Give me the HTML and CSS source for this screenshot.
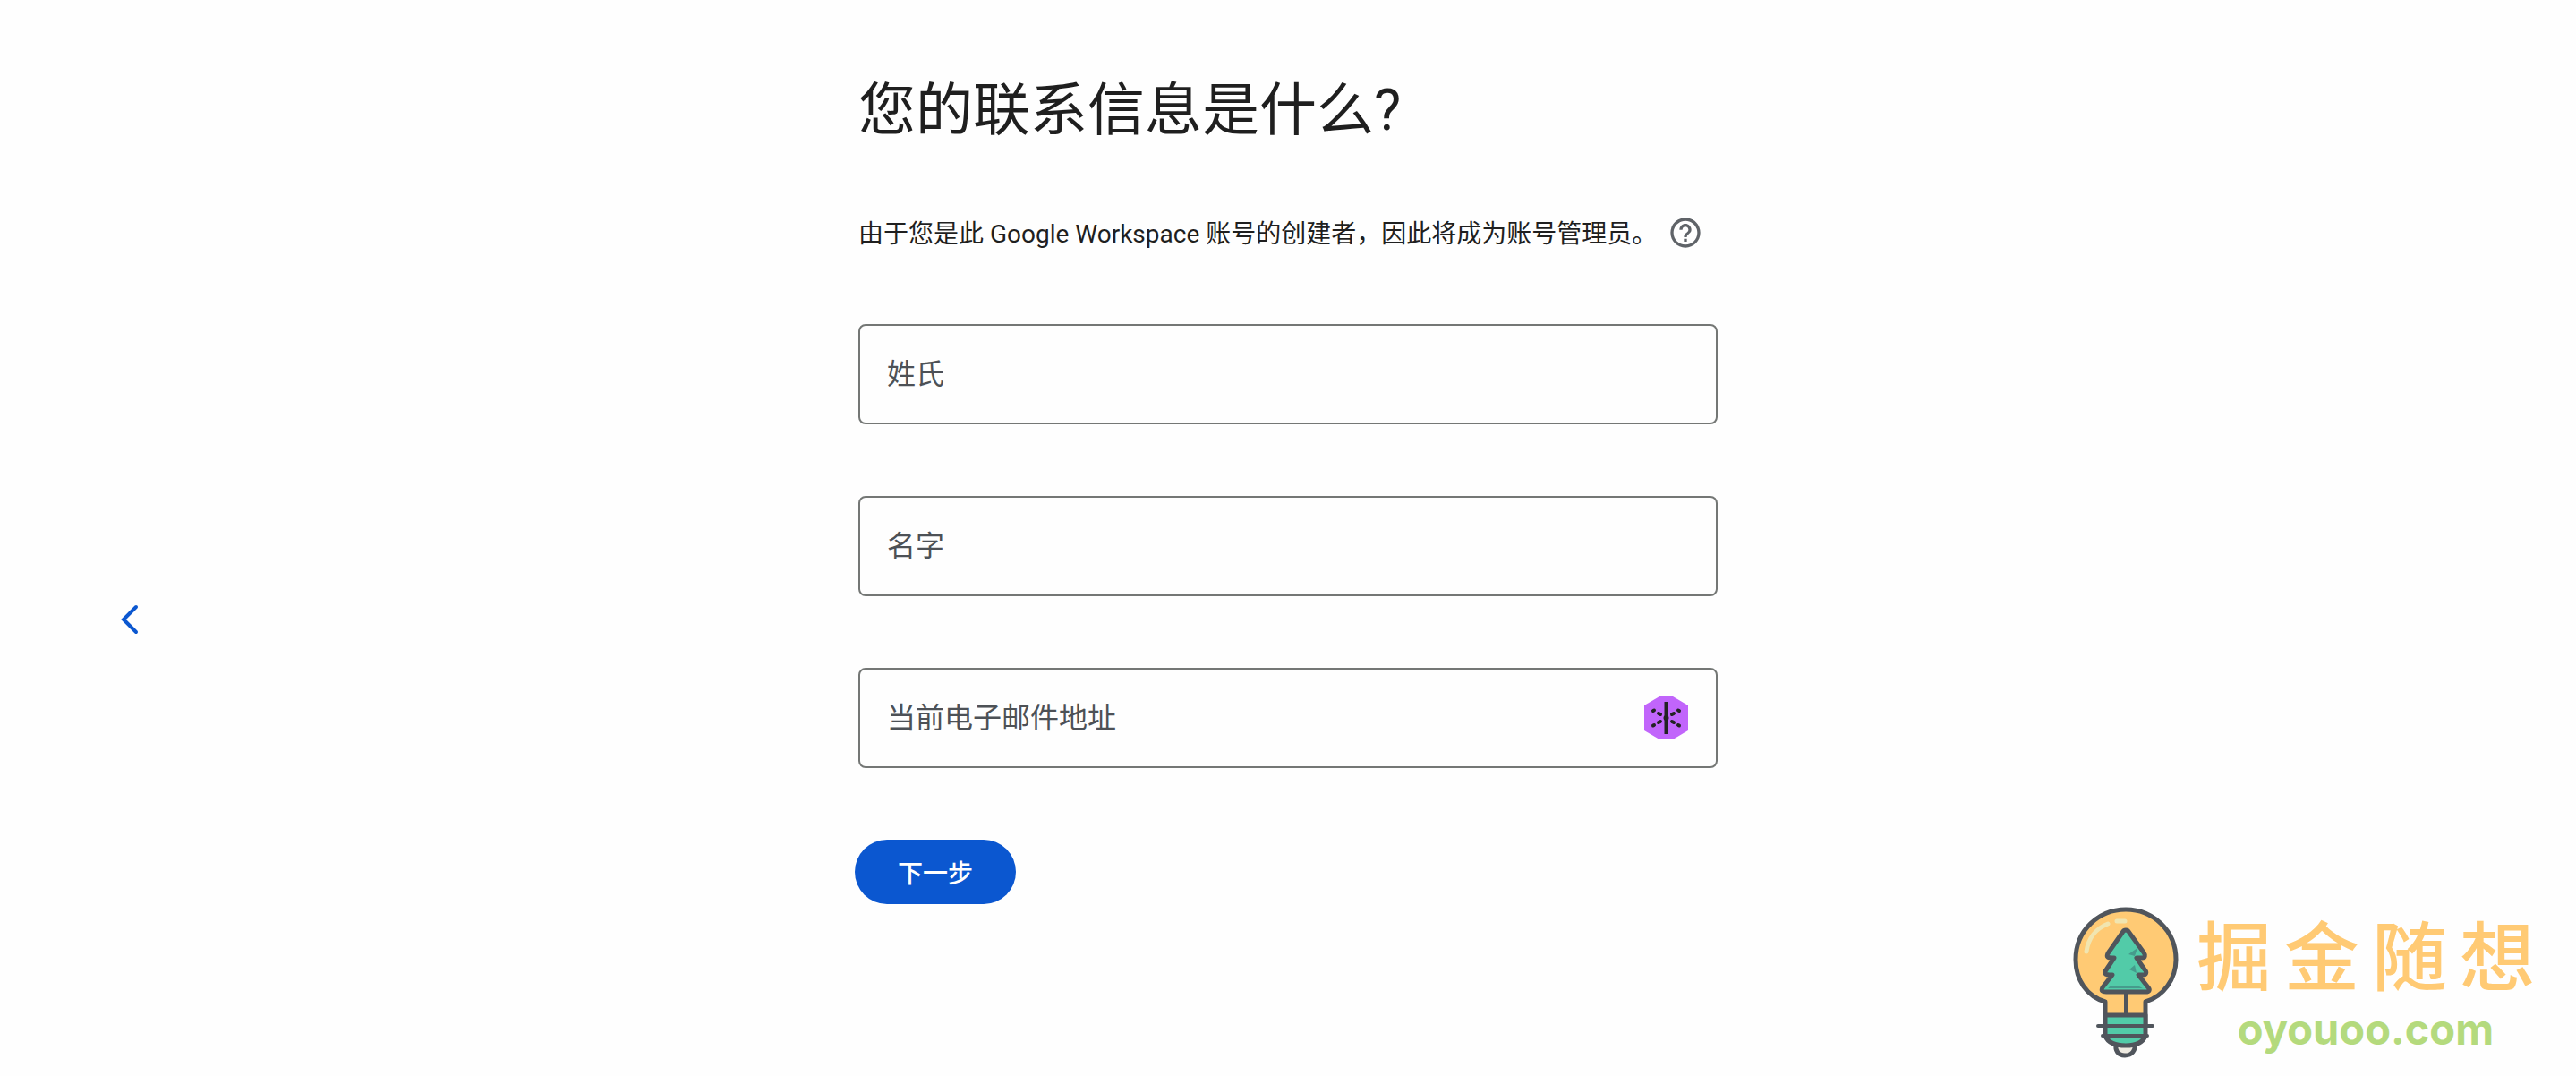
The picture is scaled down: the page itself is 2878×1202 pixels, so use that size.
FILE: index.html
```html
<!DOCTYPE html>
<html lang="zh-CN">
<head>
    <meta charset="UTF-8">
    <title>Google Workspace</title>
    <link rel="stylesheet" href="styles.css">
</head>
<body>
    <div class="page">
        <nav class="side">
            <button type="button" class="back" aria-label="返回">
                <svg width="48" height="48" viewBox="0 0 48 48">
                    <path d="M32 10 L18 24 L32 38" fill="none" stroke="#0b57d0" stroke-width="4" stroke-linecap="round"/>
                </svg>
            </button>
        </nav>

        <main class="content">
            <h1>您的联系信息是什么?</h1>

            <div class="intro">
                <p>由于您是此 Google Workspace 账号的创建者，因此将成为账号管理员。</p>
                <button type="button" class="help" aria-label="帮助">
                    <svg width="40" height="40" viewBox="0 0 24 24" fill="#5f6368">
                        <path d="M11 18h2v-2h-2v2zm1-16C6.48 2 2 6.48 2 12s4.48 10 10 10 10-4.48 10-10S17.52 2 12 2zm0 18c-4.41 0-8-3.59-8-8s3.59-8 8-8 8 3.59 8 8-3.59 8-8 8zm0-14c-2.21 0-4 1.79-4 4h2c0-1.1.9-2 2-2s2 .9 2 2c0 2-3 1.750-3 5h2c0-2.250 3-2.500 3-5 0-2.210-1.790-4-4-4z"/>
                    </svg>
                </button>
            </div>

            <form>
                <div class="field">
                    <input type="text" id="lastName" name="lastName" required>
                    <label for="lastName">姓氏</label>
                </div>
                <div class="field">
                    <input type="text" id="firstName" name="firstName" required>
                    <label for="firstName">名字</label>
                </div>
                <div class="field">
                    <input type="email" id="email" name="email" required>
                    <label for="email">当前电子邮件地址</label>
                    <svg class="field-icon" width="50" height="48" viewBox="0 0 50 48">
                        <path d="M17 0H32L49 10V38L32 48H17L0 38V10Z" fill="#c165fb"/>
                        <g stroke="#222" stroke-linecap="round" fill="none">
                            <path d="M24.500 6V42" stroke-width="4" stroke-linecap="butt"/>
                            <path d="M16 19L18 20M31 20L33 19M16 29L18 28M31 28L33 29" stroke-width="4"/>
                            <path d="M10 16L11 15.500M38 15.500L39 16M10 32.500L11 32M38 32L39 32.500" stroke-width="4"/>
                        </g>
                        <circle cx="24.500" cy="24" r="3" fill="#222"/>
                    </svg>
                </div>
                <button type="submit" class="next">下一步</button>
            </form>
        </main>

        <footer class="brand">
            <svg width="120" height="172" viewBox="0 0 120 172" stroke="#50555c" stroke-width="5" stroke-linejoin="round" stroke-linecap="round">
                <path d="M57 165C49 165 46 159 47 153H68C69 159 65 165 57 165Z" transform="translate(1 2)" fill="#eeeae1"/>
                <path d="M36 134V107C15 101 3 82 3 60C3 27 29 4 59 4C89 4 115 27 115 60C115 82 101 101 81 107V134Z" fill="#ffca74"/>
                <path d="M36 122H81V145C78 153 70 156 59 156C48 156 39 153 36 145Z" fill="#52cba8"/>
                <path d="M28 134H89M33 145H83" stroke-width="4"/>
                <path d="M59 96V122" stroke-width="4"/>
                <path d="M59 27C57 27 56 28 55 30L39 53C37 57 39 58 44 58H46L36 73C35 76 37 77 41 77H44L33 91C31 95 33 96 37 96H81C86 96 86 93 84 91L73 77H78C82 77 83 74 80 71L71 58H77C81 58 81 55 79 52L63 30C62 28 61 27 59 27Z" fill="#52cba8"/>
                <path d="M69 56L62 54L72 47M71 75L63 71L69 66M39 92H78L72 89H42Z" fill="#469b8c" stroke="none"/>
                <path d="M15 51C17 36 26 25 39 20M49 17H58" stroke="#f1e5b0" fill="none"/>
            </svg>
            <div class="brand-text">
                <div class="brand-name"><span>掘</span><span>金</span><span>随</span><span>想</span></div>
                <div class="brand-site">oyouoo.com</div>
            </div>
        </footer>
    </div>
</body>
</html>
```

FILE: styles.css
```css
* {
    box-sizing: border-box;
}

body {
    margin: 0;
    background-color: #fefefe;
    color: #1f1f1f;
    font-family: Roboto, "Noto Sans CJK SC", sans-serif;
}

button {
    border: none;
    background: none;
    padding: 0;
    font-family: inherit;
    cursor: pointer;
}

svg {
    display: block;
}

.page {
    display: grid;
    grid-template-columns: 1fr minmax(0, 960px) 1fr;
    min-height: 100vh;
}

.side {
    padding: 668px 0 0 120px;
}

.content {
    padding-top: 84px;
}

h1 {
    margin: 0;
    font-size: 64px;
    line-height: 80px;
    font-weight: 400;
}

.intro {
    display: flex;
    align-items: flex-start;
    gap: 12px;
    margin: 76px 0 78px;
}

.intro p {
    margin: 0;
    font-size: 28px;
    line-height: 44px;
}

.field {
    position: relative;
    margin-bottom: 80px;
}

.field input {
    display: block;
    width: 100%;
    height: 112px;
    padding: 0 32px;
    border: 2px solid #747775;
    border-radius: 8px;
    background: transparent;
    color: inherit;
    font-family: inherit;
    font-size: 32px;
}

.field label {
    position: absolute;
    top: 32px;
    left: 32px;
    color: #4d5156;
    font-size: 32px;
    line-height: 48px;
    pointer-events: none;
}

.field input:focus + label,
.field input:valid + label {
    top: -16px;
    background-color: #fefefe;
    font-size: 24px;
    line-height: 32px;
}

.field-icon {
    position: absolute;
    top: 32px;
    right: 32px;
}

.next {
    height: 72px;
    margin-left: -4px;
    padding: 0 48px;
    border-radius: 36px;
    background-color: #0b57d0;
    color: #fff;
    font-size: 28px;
    font-weight: 500;
}

.brand {
    display: flex;
    align-self: end;
    justify-self: end;
    align-items: flex-start;
    gap: 18px;
    padding: 0 46px 18px 0;
}

.brand-text {
    text-align: center;
}

.brand-name {
    display: flex;
    gap: 14px;
    color: #ffca74;
    font-family: "Noto Sans CJK SC", sans-serif;
    font-size: 84px;
    line-height: 104px;
    font-weight: 500;
}

.brand-site {
    color: #b4da7d;
    font-family: Inter, sans-serif;
    font-size: 47px;
    line-height: 68px;
    font-weight: 700;
}
```
